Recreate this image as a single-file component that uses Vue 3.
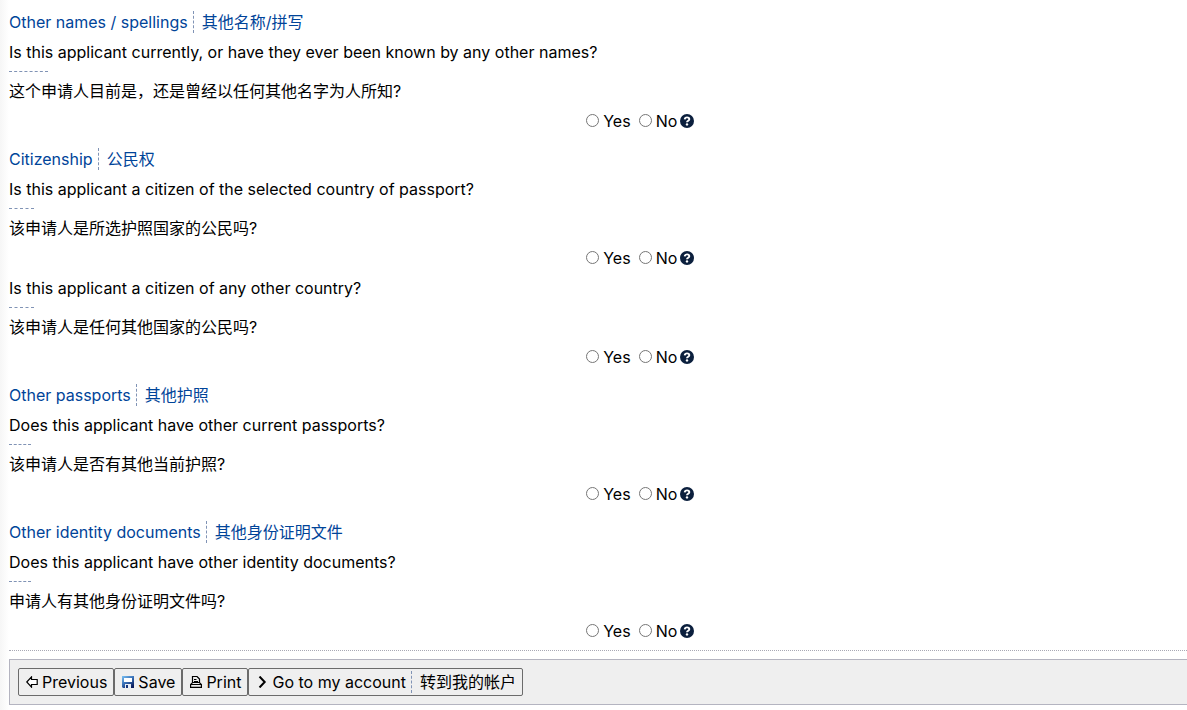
<script setup>
import { reactive } from 'vue'

const sections = [
  {
    id: 'names', en: 'Other names / spellings', zh: '其他名称/拼写',
    questions: [
      { id: 'other-names', en: 'Is this applicant currently, or have they ever been known by any other names?', zh: '这个申请人目前是，还是曾经以任何其他名字为人所知?' },
    ],
  },
  {
    id: 'citizenship', en: 'Citizenship', zh: '公民权',
    questions: [
      { id: 'citizen-passport', en: 'Is this applicant a citizen of the selected country of passport?', zh: '该申请人是所选护照国家的公民吗?' },
      { id: 'citizen-other', en: 'Is this applicant a citizen of any other country?', zh: '该申请人是任何其他国家的公民吗?' },
    ],
  },
  {
    id: 'passports', en: 'Other passports', zh: '其他护照',
    questions: [
      { id: 'other-passports', en: 'Does this applicant have other current passports?', zh: '该申请人是否有其他当前护照?' },
    ],
  },
  {
    id: 'documents', en: 'Other identity documents', zh: '其他身份证明文件',
    questions: [
      { id: 'other-documents', en: 'Does this applicant have other identity documents?', zh: '申请人有其他身份证明文件吗?' },
    ],
  },
]
const answers = reactive({})
</script>

<template>
  <form class="page" @submit.prevent>
    <section v-for="s in sections" :key="s.id" class="section">
      <h2 class="heading">
        <span>{{ s.en }}</span><span class="side" lang="zh">{{ s.zh }}</span>
      </h2>
      <div v-for="q in s.questions" :key="q.id" class="question" role="radiogroup" :aria-labelledby="q.id">
        <p :id="q.id" class="text">{{ q.en }}</p>
        <p class="text translation" lang="zh">{{ q.zh }}</p>
        <div class="answers">
          <label class="option"><input v-model="answers[q.id]" type="radio" :name="q.id" value="yes">Yes</label>
          <label class="option"><input v-model="answers[q.id]" type="radio" :name="q.id" value="no">No</label>
          <button type="button" class="help" aria-label="Help">
            <svg viewBox="0 0 14 14" width="14" height="14" aria-hidden="true">
              <circle cx="7" cy="7" r="7" fill="#0b1f3d" />
              <path d="M4.700 5.300C4.900 4 5.700 3.400 7 3.400c1.400 0 2.300.7 2.300 1.800 0 1.600-2.300 1.500-2.300 3.100" fill="none" stroke="#fff" stroke-width="1.900" />
              <circle cx="7" cy="10.400" r="1.200" fill="#fff" />
            </svg>
          </button>
        </div>
      </div>
    </section>

    <div class="toolbar">
      <button type="button" class="action">
        <svg viewBox="0 0 12 12" width="12" height="12" aria-hidden="true">
          <path d="M.8 6 5.500.9V3.500h5.700v5H5.500v2.600z" fill="#fff" stroke="#000" stroke-width="1.200" />
        </svg>
        <span>Previous</span>
      </button>
      <button type="button" class="action">
        <svg viewBox="0 0 12 12" width="12" height="12" aria-hidden="true">
          <defs>
            <linearGradient id="disk" x1="0" y1="0" x2=".7" y2="1">
              <stop offset="0" stop-color="#7cc3f5" /><stop offset=".5" stop-color="#3a72b8" /><stop offset="1" stop-color="#0b1c5c" />
            </linearGradient>
          </defs>
          <path d="M0 0h12v12H1l-1-1z" fill="url(#disk)" />
          <path d="M2 2h8v4H2z" fill="#fff" />
          <path d="M3 8h6v4H3z" fill="#e8edf5" />
          <path d="M4 9h2v3H4z" fill="#16357c" />
        </svg>
        <span>Save</span>
      </button>
      <button type="button" class="action">
        <svg viewBox="0 0 12 12" width="12" height="12" aria-hidden="true">
          <path d="M2.500 6.500v-6h4.500l2.500 2.500v3.500M.600 11.400v-3l2-1.900h6.800l2 1.900v3zM4 3.500h2.500M4 5.500h4M1 8.500h10" fill="none" stroke="#000" stroke-width="1.200" />
        </svg>
        <span>Print</span>
      </button>
      <button type="button" class="action">
        <svg viewBox="0 0 12 12" width="12" height="12" aria-hidden="true">
          <path d="M3.500.500 8.700 6l-5.200 5.500" fill="none" stroke="#000" stroke-width="2" />
        </svg>
        <span>Go to my account</span><span class="side" lang="zh">转到我的帐户</span>
      </button>
    </div>
  </form>
</template>

<style>
body {
  margin: 0;
  background: #fff linear-gradient(to right, #f6f6f6, #fff) no-repeat 0 0 / 9px 100%;
}
</style>

<style scoped>
.page {
  padding: 7px 0 5px 9px;
  font: 16px/30px Inter, "Noto Sans CJK SC", sans-serif;
  color: #000;
}
.section + .section { margin-top: 8px; }
.heading {
  display: flex;
  align-items: center;
  margin: 0;
  font-size: 16px;
  font-weight: 400;
  color: #004499;
}
.side {
  margin-left: 5px;
  padding-left: 8px;
  border-left: 1px dashed #8093b5;
  line-height: 22px;
}
.text { margin: 0; }
.translation { width: fit-content; }
.translation::before {
  content: "";
  display: block;
  width: 10%;
  margin: 4px 0;
  border-top: 1px dashed #8093b5;
}
.answers {
  display: flex;
  align-items: center;
  padding-left: 49%;
}
.option {
  display: flex;
  align-items: center;
  margin-right: 8px;
}
.option input {
  width: 13px;
  height: 13px;
  margin: 0 4px 2px 0;
}
.option + .help { margin-left: -5px; }
.help {
  display: flex;
  padding: 0;
  border: 0;
  background: none;
}
.toolbar {
  display: flex;
  margin-top: 13px;
  padding: 8px;
  border: 1px solid #b4b4c0;
  border-right: 0;
  background: #efefef;
  position: relative;
}
.toolbar::before {
  content: "";
  position: absolute;
  top: -10px;
  left: -1px;
  right: 0;
  border-top: 1px dotted #a8a8b4;
}
.action {
  display: flex;
  align-items: center;
  height: 28px;
  padding: 0 6px 0 7px;
  border: 1px solid #6b6b6b;
  border-radius: 2px;
  background: #efefef;
  font: inherit;
  color: #000;
}
.action svg { margin-right: 4px; }
</style>
